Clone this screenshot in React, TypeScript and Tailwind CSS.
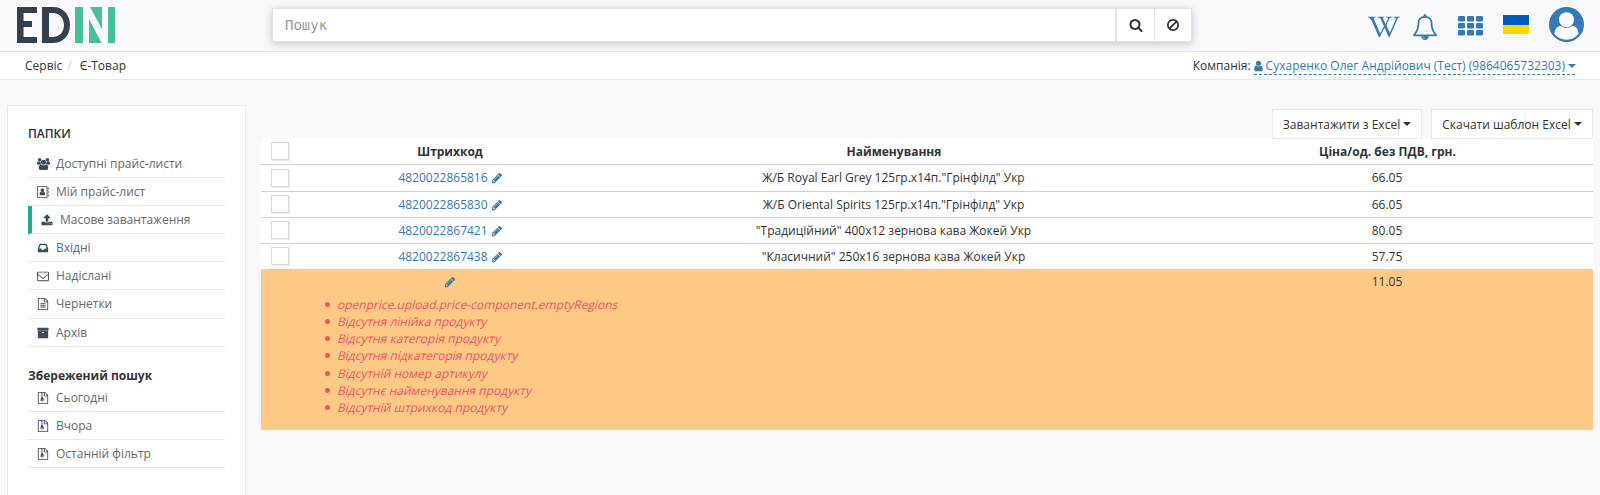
import React from "react";
import { FaWikipediaW } from "react-icons/fa";

const FILE =
  "M1596 380q28 28 48 76t20 88v1152q0 40-28 68t-68 28h-1344q-40 0-68-28t-28-68v-1600q0-40 28-68t68-28h896q40 0 88 20t76 48zm-444-244v376h376q-10-29-22-41l-313-313q-12-12-41-22zm384 1528v-1024h-416q-40 0-68-28t-28-68v-416h-768v1536h1280z";

const ICONS = {
  users:
    "M657 896q-162 5-265 128h-134q-82 0-138-40.5t-56-118.5q0-353 124-353 6 0 43.5 21t97.5 42.5 119 21.5q67 0 133-23-5 37-5 66 0 159 90 287zm1071 637q0 120-73 189.5t-194 69.5h-874q-121 0-194-69.5t-73-189.5q0-53 3.5-103.5t14-109 26.5-108.5 43-97.5 62-81 85.5-53.5 111.5-20q10 0 43 21.5t73 48 107 48 135 21.5 135-21.5 107-48 73-48 43-21.5q61 0 111.5 20t85.5 53.5 62 81 43 97.5 26.5 108.5 14 109 3.5 103.5zm-1024-1277q0 106-75 181t-181 75-181-75-75-181 75-181 181-75 181 75 75 181zm704 384q0 159-112.5 271.5t-271.5 112.5-271.5-112.5-112.5-271.5 112.5-271.5 271.5-112.5 271.5 112.5 112.5 271.5zm576 225q0 78-56 118.5t-138 40.5h-134q-103-123-265-128 90-128 90-287 0-29-5-66 66 23 133 23 59 0 119-21.5t97.5-42.5 43.5-21q124 0 124 353zm-128-609q0 106-75 181t-181 75-181-75-75-181 75-181 181-75 181 75 75 181z",
  book:
    "M192 0h1216q66 0 113 47t47 113v1472q0 66-47 113t-113 47h-1216q-66 0-113-47t-47-113v-1472q0-66 47-113t113-47zM192 128q-32 0-32 32v1472q0 32 32 32h1216q32 0 32-32v-1472q0-32-32-32zM1620 256h140v256h-140zM1620 768h140v256h-140zM1620 1280h140v256h-140zM800 352q112 0 191 79t79 191-79 191-191 79-191-79-79-191 79-191 191-79zM1024 850q190 30 190 380 0 146-120 146h-588q-120 0-120-146 0-350 190-380 100 84 224 84t224-84z",
  upload:
    "M1344 1472q0-26-19-45t-45-19-45 19-19 45 19 45 45 19 45-19 19-45zm256 0q0-26-19-45t-45-19-45 19-19 45 19 45 45 19 45-19 19-45zm128-224v320q0 40-28 68t-68 28h-1472q-40 0-68-28t-28-68v-320q0-40 28-68t68-28h427q21 56 70.5 92t110.5 36h256q61 0 110.5-36t70.5-92h427q40 0 68 28t28 68zm-325-648q-17 40-59 40h-256v448q0 26-19 45t-45 19h-256q-26 0-45-19t-19-45v-448h-256q-42 0-59-40-17-39 14-69l448-448q18-19 45-19t45 19l448 448q31 30 14 69z",
  inbox:
    "M1151 960h316q-1-3-2.5-8.5t-2.5-7.5l-212-496h-708l-212 496q-1 3-2.5 8.5t-2.5 7.5h316l95 192h320zm513 30v482q0 26-19 45t-45 19h-1408q-26 0-45-19t-19-45v-482q0-62 25-123l238-552q10-25 36.5-42t52.5-17h832q26 0 52.5 17t36.5 42l238 552q25 61 25 123z",
  mail:
    "M1664 1504v-768q-32 36-69 66-268 206-426 338-51 43-83 67t-86.5 48.5-102.5 24.5h-2q-48 0-102.5-24.5t-86.5-48.5-83-67q-158-132-426-338-37-30-69-66v768q0 13 9.5 22.5t22.5 9.5h1472q13 0 22.5-9.5t9.5-22.5zm0-1051v-24.5l-.5-13-3-12.5-5.5-9-9-7.5-14-2.5h-1472q-13 0-22.5 9.5t-9.5 22.5q0 168 147 284 193 152 401 317 6 5 35 29.5t46 37.5 44.5 31.5 50.5 27.5 43 9h2q20 0 43-9t50.5-27.5 44.5-31.5 46-37.5 35-29.5q208-165 401-317 54-43 100.5-115.5t46.5-131.5zm128-37v1088q0 66-47 113t-113 47h-1472q-66 0-113-47t-47-113v-1088q0-66 47-113t113-47h1472q66 0 113 47t47 113z",
  draft: FILE + "M512 768h768v128h-768zM512 1024h768v128h-768zM512 1280h768v128h-768z",
  archive:
    "M1088 832q0-26-19-45t-45-19h-256q-26 0-45 19t-19 45 19 45 45 19h256q26 0 45-19t19-45zm576-192v960q0 26-19 45t-45 19h-1408q-26 0-45-19t-19-45v-960q0-26 19-45t45-19h1408q26 0 45 19t19 45zm64-448v256q0 26-19 45t-45 19h-1536q-26 0-45-19t-19-45v-256q0-26 19-45t45-19h1536q26 0 45 19t19 45z",
  zip:
    FILE +
    "M640 128h128v128h-128zM768 256h128v128h-128zM640 384h128v128h-128zM768 512h128v128h-128zM640 640h128v128h-128zM781 768h115l107 349q21 70 21 99 0 83-75 137.500t-181 54.500-181-54.500-75-137.500q0-29 21-99l107-349zM768 1280q53 0 90.500-19t37.500-45-37.500-45-90.500-19-90.500 19-37.500 45 37.500 45 90.500 19z",
  search:
    "M1216 832q0-185-131.5-316.5t-316.5-131.5-316.5 131.5-131.5 316.5 131.5 316.5 316.5 131.5 316.5-131.5 131.5-316.5zm512 832q0 52-38 90t-90 38q-54 0-90-38l-343-342q-179 124-399 124-143 0-273.5-55.5t-225-150-150-225-55.5-273.5 55.5-273.5 150-225 225-150 273.5-55.5 273.5 55.5 225 150 150 225 55.5 273.5q0 220-124 399l343 343q37 37 37 90z",
  ban:
    "M1440 893q0-161-87-295l-754 753q137 89 297 89 111 0 211.5-43.5t173.5-116.5 116-174.5 43-212.5zm-999 299l755-754q-135-91-300-91-148 0-273 73t-198 199-73 274q0 162 89 299zm1223-299q0 157-61 300t-163.5 246-245 164-298.5 61-298.5-61-245-164-163.5-246-61-300 61-299.5 163.5-245.5 245-164 298.5-61 298.5 61 245 164 163.5 245.5 61 299.5z",
  pencil:
    "M491 1536l91-91-235-235-91 91v107h128v128h107zm523-928q0-22-22-22-10 0-17 7l-542 542q-7 7-7 17 0 22 22 22 10 0 17-7l542-542q7-7 7-17zm-54-192l416 416-832 832h-416v-416zm683 96q0 53-37 90l-166 166-416-416 166-165q36-38 90-38 53 0 91 38l235 234q37 39 37 91z",
  user:
    "M1536 1399q0 109-62.5 187t-150.5 78h-854q-88 0-150.5-78t-62.5-187q0-85 8.5-160.5t31.5-152 58.5-131 94-89 134.5-34.5q131 128 313 128t313-128q76 0 134.5 34.5t94 89 58.5 131 31.5 152 8.5 160.5zm-256-887q0 159-112.5 271.5t-271.5 112.5-271.5-112.5-112.5-271.5 112.5-271.5 271.5-112.5 271.5 112.5 112.5 271.5z",
  bell:
    "M912 1696q0-16-16-16-59 0-101.5-42.5t-42.5-101.5q0-16-16-16t-16 16q0 73 51.5 124.5t124.5 51.5q16 0 16-16zm-666-288h1300q-266-300-266-832 0-51-24-105t-69-103-121.5-80.5-169.5-31.5-169.5 31.5-121.5 80.5-69 103-24 105q0 532-266 832zm1482 0q0 52-38 90t-90 38h-448q0 106-75 181t-181 75-181-75-75-181h-448q-52 0-90-38t-38-90q50-42 91-88t85-119.5 74.5-158.5 50-206 19.5-260q0-152 117-282.5t307-158.5q-8-19-8-39 0-40 28-68t68-28 68 28 28 68q0 20-8 39 190 28 307 158.5t117 282.5q0 139 19.5 260t50 206 74.5 158.5 85 119.5 91 88z",
};

type IconName = keyof typeof ICONS;

function Icon({ name, className, box = "0 0 1792 1792" }: { name: IconName; className: string; box?: string }) {
  return (
    <svg viewBox={box} className={`shrink-0 ${className}`} fill="currentColor" fillRule={name === "book" || name === "zip" ? "evenodd" : "nonzero"} aria-hidden="true">
      <path d={ICONS[name]} />
    </svg>
  );
}

function Caret() {
  return <span className="inline-block border-x-4 border-t-4 border-x-transparent border-t-current" />;
}

function Logo() {
  return (
    <svg viewBox="0 0 98 36" className="h-9 w-[98px]" aria-label="EDIN">
      <g fill="#36404d">
        <path d="M0 0h20v6H6.500v8H15v6H6.500v10H20v6H0z" />
        <path fillRule="evenodd" d="M25 0h11c10 0 17 7.500 17 18s-7 18-17 18H25zM32 6v24h4c6.500 0 11-5 11-12S42.500 6 36 6z" />
      </g>
      <path fill="#47bf98" d="M58 0h8v36h-8zM72 12l12.500 24H72zM73 0h12v22zM91 0h7v36h-7z" />
    </svg>
  );
}

const folders: { icon: IconName; label: string; active?: boolean; tall?: boolean }[] = [
  { icon: "users", label: "Доступні прайс-листи" },
  { icon: "book", label: "Мій прайс-лист" },
  { icon: "upload", label: "Масове завантаження", active: true },
  { icon: "inbox", label: "Вхідні" },
  { icon: "mail", label: "Надіслані" },
  { icon: "draft", label: "Чернетки", tall: true },
  { icon: "archive", label: "Архів" },
];

const saved = ["Сьогодні", "Вчора", "Останній фільтр"];

const products = [
  { code: "4820022865816", name: 'Ж/Б Royal Earl Grey 125гр.х14п."Грінфілд" Укр', price: "66.05" },
  { code: "4820022865830", name: 'Ж/Б Oriental Spirits 125гр.х14п."Грінфілд" Укр', price: "66.05" },
  { code: "4820022867421", name: '"Традиційний" 400х12 зернова кава Жокей Укр', price: "80.05" },
  { code: "4820022867438", name: '"Класичний" 250х16 зернова кава Жокей Укр', price: "57.75" },
];

const errors = [
  "openprice.upload.price-component.emptyRegions",
  "Відсутня лінійка продукту",
  "Відсутня категорія продукту",
  "Відсутня підкатегорія продукту",
  "Відсутній номер артикулу",
  "Відсутнє найменування продукту",
  "Відсутній штрихкод продукту",
];

function FolderRow({ icon, label, active, tall }: { icon: IconName; label: string; active?: boolean; tall?: boolean }) {
  return (
    <li
      className={`flex border-b border-[#e7eaec] pl-2 text-[#676a6c] ${tall ? "h-[29px] items-start pt-[5px]" : "h-7 items-center"} ${
        active ? "border-l-4 border-l-[#1bab8f]" : ""
      }`}
    >
      <span className={`flex w-[14px] justify-center text-[#3c4a5b] ${tall ? "pt-[3px]" : ""}`}>
        {icon === "users" ? <Icon name="users" box="64 0 1920 1792" className="h-3 w-[13px]" /> : <Icon name={icon} className="size-3" />}
      </span>
      <span className="ml-[6px]">{label}</span>
    </li>
  );
}

function Checkbox() {
  return <span className="block size-[18px] border border-[#dcd9d3] bg-white shadow-[1px_1px_0_#eeebe6]" />;
}

const grid = "grid grid-cols-[30px_317px_573px_412px]";

export default function App() {
  return (
    <div className="flex h-[495px] w-[1600px] flex-col overflow-hidden bg-[#f9f9fb] font-['Open_Sans','Noto_Sans',sans-serif] text-[12px] leading-[17px] text-[#333]">
      <header className="flex h-[52px] shrink-0 border-b border-[#e4e6ea]">
        <div className="w-[272px] pl-[17px] pt-[7px]">
          <Logo />
        </div>
        <div className="mt-2 flex h-[34px] w-[920px] border border-[#e2e3e8] bg-white shadow-[0_2px_8px_rgba(60,60,100,0.28)]">
          <div className="flex flex-1 items-center pl-3 font-['DejaVu_Sans_Mono','Liberation_Mono',monospace] text-[14px] text-[#999]">Пошук</div>
          <div className="flex w-[39px] items-center justify-center border-l-2 border-[#e4e5e8]">
            <Icon name="search" className="size-[14px]" />
          </div>
          <div className="flex w-[37px] items-center justify-center border-l border-[#e4e5e8]">
            <Icon name="ban" className="size-[14px]" />
          </div>
        </div>
        <div className="ml-auto flex items-start pr-[16px] text-[#337ab7]">
          <FaWikipediaW className="mt-[11px] h-8 w-8" />
          <Icon name="bell" className="ml-[12px] mt-[14px] size-[26px]" />
          <svg viewBox="0 0 25 20" className="ml-[20px] mt-4 h-5 w-[25px]" fill="currentColor">
            {[0, 9, 18].map((x) => [0, 7, 14].map((y) => <rect key={`${x}-${y}`} x={x} y={y} width="7" height="5.500" rx="1.200" />))}
          </svg>
          <div className="ml-5 mt-[15px] flex h-[19px] w-[26px] flex-col">
            <span className="flex-1 bg-[#005bbb]" />
            <span className="flex-1 bg-[#ffd500]" />
          </div>
          <svg viewBox="0 0 36 36" className="ml-5 mt-[7px] h-[35px] w-[35px]">
            <circle cx="18" cy="18" r="18" fill="#337ab7" />
            <circle cx="18" cy="13" r="7.700" fill="#f9f9fb" />
            <path d="M5.500 27.500c.7-5 2.800-8 6.800-8.200 3.300 3 8.100 3 11.400 0 4 .2 6.100 3.200 6.800 8.200A15.600 15.600 0 0 1 18 33.600 15.600 15.600 0 0 1 5.500 27.500z" fill="#f9f9fb" />
          </svg>
        </div>
      </header>

      <nav className="flex h-7 shrink-0 justify-between border-b border-[#e4e6ea] bg-white px-[25px] pt-[5px]">
        <div className="flex">
          <span>Сервіс</span>
          <span className="ml-[5px] text-[#ccc]">/</span>
          <span className="ml-2">Є-Товар</span>
        </div>
        <div className="flex">
          <span>Компанія:</span>
          <span className="ml-[3px] flex h-[18px] items-center border-b border-dashed border-[#337ab7] text-[#337ab7]">
            <Icon name="user" box="256 0 1280 1792" className="h-3 w-[9px]" />
            <span className="mx-[3px]">Сухаренко Олег Андрійович (Тест) (9864065732303)</span>
            <span className="flex w-[7px] justify-center">
              <Caret />
            </span>
          </span>
        </div>
      </nav>

      <div className="flex min-h-0 flex-1">
        <aside className="ml-[7px] mt-[25px] w-[239px] shrink-0 border border-b-0 border-[#e7e7f2] bg-white px-5 pt-[19px]">
          <h2 className="h-[25px] font-semibold">ПАПКИ</h2>
          <ul>
            {folders.map((f) => (
              <FolderRow key={f.label} {...f} />
            ))}
          </ul>
          <h2 className="mt-5 h-[17px] font-bold">Збережений пошук</h2>
          <ul>
            {saved.map((s) => (
              <FolderRow key={s} icon="zip" label={s} />
            ))}
          </ul>
        </aside>

        <main className="ml-[15px] mt-[29px] w-[1332px]">
          <div className="flex justify-end gap-[9px]">
            <button className="flex h-[30px] w-[150px] items-center justify-center gap-[3px] border border-[#e7eaec] bg-white">
              Завантажити з Excel <Caret />
            </button>
            <button className="flex h-[30px] w-[162px] items-center justify-center gap-[3px] border border-[#e7eaec] bg-white">
              Скачати шаблон Excel <Caret />
            </button>
          </div>
          <div className={`${grid} h-[26px] items-center border-b border-[#d0d0d0] bg-white text-center font-bold`}>
            <span className="pb-px pl-[10px]">
              <Checkbox />
            </span>
            <span className="pl-px">Штрихкод</span>
            <span className="pr-px">Найменування</span>
            <span className="pl-px">Ціна/од. без ПДВ, грн.</span>
          </div>
          {products.map((p, i) => (
            <div key={p.code} className={`${grid} border-b border-[#d0d0d0] bg-white text-center ${i === 0 ? "h-[27px]" : "h-[26px]"}`}>
              <span className={`pl-[10px] ${i === 0 ? "pt-1" : "pt-[3px]"}`}>
                <Checkbox />
              </span>
              <span className="mt-1 flex h-[17px] items-center justify-center gap-[3px] pl-[2px] text-[#337ab7]">
                {p.code}
                <Icon name="pencil" className="size-3" />
              </span>
              <span className="pr-[2px] pt-1">{p.name}</span>
              <span className="pt-1">{p.price}</span>
            </div>
          ))}
          <div className="h-[160px] border-b border-[#d0d0d0] bg-[#fec985]">
            <div className={`${grid} h-6 pt-[3px] text-center`}>
              <span />
              <span className="flex h-[17px] items-center justify-center pl-px text-[#337ab7]">
                <Icon name="pencil" className="size-3" />
              </span>
              <span />
              <span>{"11.05"}</span>
            </div>
            <ul className="pl-[64px] pt-[2px] leading-[17.143px] text-[#ed5565]">
              {errors.map((e) => (
                <li key={e} className="flex items-center">
                  <span className="mr-[7px] size-[5px] rounded-full bg-[#ed5565]" />
                  <span className="origin-[0_13px] skew-x-[-14deg]">{e}</span>
                </li>
              ))}
            </ul>
          </div>
        </main>
      </div>
    </div>
  );
}
